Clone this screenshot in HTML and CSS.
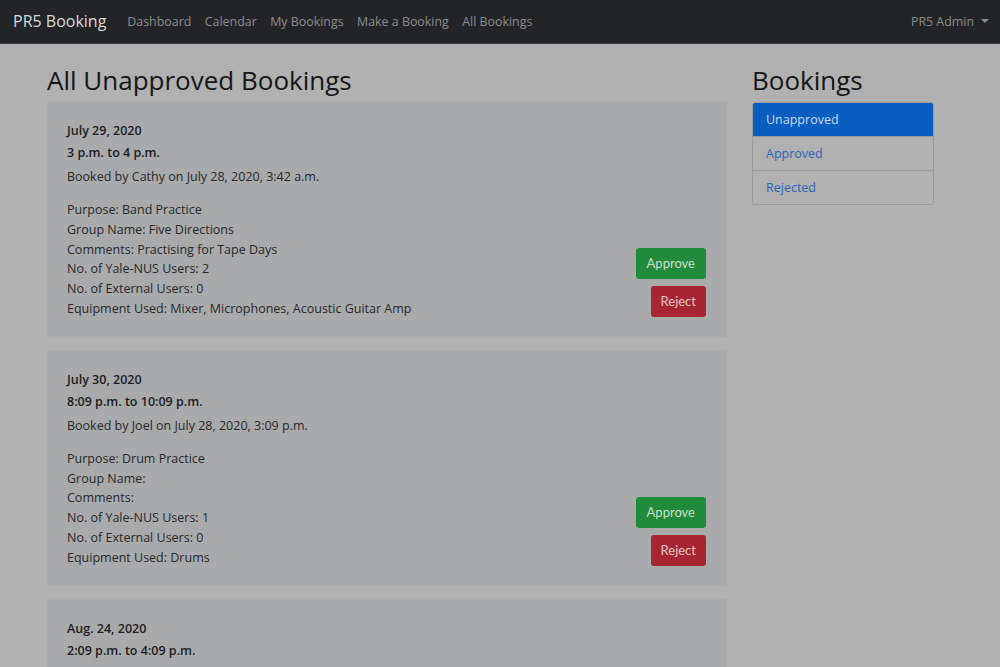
FILE: index.html
```html
<!DOCTYPE html>
<html lang="en">
<head>
<meta charset="utf-8">
<title>All Unapproved Bookings</title>
<link rel="stylesheet" href="styles.css">
</head>
<body>
<nav class="navbar">
  <div class="nav-left">
    <a class="brand" href="#">PR5 Booking</a>
    <a class="nav-link" href="#">Dashboard</a>
    <a class="nav-link" href="#">Calendar</a>
    <a class="nav-link" href="#">My Bookings</a>
    <a class="nav-link" href="#">Make a Booking</a>
    <a class="nav-link" href="#">All Bookings</a>
  </div>
  <a class="nav-link admin" href="#">PR5 Admin <span class="caret"></span></a>
</nav>
<div class="page">
  <main class="main">
    <h1 class="title">All Unapproved Bookings</h1>
    <section class="card">
      <div class="info">
        <div class="bold">July 29, 2020</div>
        <div class="bold time">3 p.m. to 4 p.m.</div>
        <div class="booked">Booked by Cathy on July 28, 2020, 3:42 a.m.</div>
        <div class="details">
          <div>Purpose: Band Practice</div>
          <div>Group Name: Five Directions</div>
          <div>Comments: Practising for Tape Days</div>
          <div>No. of Yale-NUS Users: 2</div>
          <div>No. of External Users: 0</div>
          <div>Equipment Used: Mixer, Microphones, Acoustic Guitar Amp</div>
        </div>
      </div>
      <div class="actions">
        <button class="btn approve">Approve</button>
        <button class="btn reject">Reject</button>
      </div>
    </section>
    <section class="card">
      <div class="info">
        <div class="bold">July 30, 2020</div>
        <div class="bold time">8:09 p.m. to 10:09 p.m.</div>
        <div class="booked">Booked by Joel on July 28, 2020, 3:09 p.m.</div>
        <div class="details">
          <div>Purpose: Drum Practice</div>
          <div>Group Name:</div>
          <div>Comments:</div>
          <div>No. of Yale-NUS Users: 1</div>
          <div>No. of External Users: 0</div>
          <div>Equipment Used: Drums</div>
        </div>
      </div>
      <div class="actions">
        <button class="btn approve">Approve</button>
        <button class="btn reject">Reject</button>
      </div>
    </section>
    <section class="card">
      <div class="info">
        <div class="bold">Aug. 24, 2020</div>
        <div class="bold time">2:09 p.m. to 4:09 p.m.</div>
        <div class="booked">Booked by Joel on July 28, 2020, 3:09 p.m.</div>
      </div>
    </section>
  </main>
  <aside class="side">
    <h2 class="side-title">Bookings</h2>
    <div class="list">
      <a class="list-item active" href="#">Unapproved</a>
      <a class="list-item" href="#">Approved</a>
      <a class="list-item" href="#">Rejected</a>
    </div>
  </aside>
</div>
</body>
</html>
```

FILE: styles.css
```css
html, body {
  margin: 0;
  padding: 0;
  height: 100%;
  overflow: hidden;
}
body {
  background: #b1b1b1;
  font-family: "Open Sans", "Noto Sans", sans-serif;
  font-size: 12.5px;
  line-height: 19.8px;
  color: #27282a;
}
a { text-decoration: none; }

.navbar {
  height: 44px;
  background: #222427;
  border-bottom: 1px solid #3a3c3e;
  box-sizing: border-box;
  display: flex;
  align-items: center;
  justify-content: space-between;
  padding: 0 11px 0 13px;
}
.nav-left {
  display: flex;
  align-items: center;
}
.brand {
  color: #d9d9d9;
  font-size: 16px;
  margin-right: 21px;
}
.nav-link {
  color: #8b8c8d;
  font-size: 12.4px;
  margin-right: 13.5px;
}
.admin {
  margin-right: 0;
  display: flex;
  align-items: center;
}
.caret {
  display: inline-block;
  margin-left: 7px;
  width: 0;
  height: 0;
  border-left: 4px solid transparent;
  border-right: 4px solid transparent;
  border-top: 4px solid #8b8c8d;
}

.page {
  display: flex;
  padding-left: 47px;
  gap: 25px;
}
.main {
  width: 680px;
}
.title {
  font-weight: 400;
  font-size: 26px;
  line-height: 32px;
  margin: 20px 0 0 0;
  color: #151617;
  height: 37px;
}
.card {
  background: #a9aaac;
  padding: 20px 21px 18px 20px;
  margin-bottom: 13px;
  display: flex;
  justify-content: space-between;
  align-items: flex-end;
}
.bold {
  font-weight: 600;
  color: #1c1d1f;
  line-height: 20px;
}
.time {
  margin-top: 2px;
}
.booked {
  margin-top: 4px;
  line-height: 20px;
}
.details {
  margin-top: 13px;
}
.actions {
  display: flex;
  flex-direction: column;
  align-items: flex-end;
  gap: 7px;
  margin-bottom: 2px;
}
.btn {
  font-family: Lato, sans-serif;
  font-size: 13px;
  border: none;
  border-radius: 3px;
  height: 31px;
  padding: 0 11px;
  cursor: pointer;
}
.approve {
  background: #1f8b3b;
  color: #c9dfcd;
}
.reject {
  background: #a72431;
  color: #e2c6c9;
  padding: 0 10px;
}

.side {
  width: 182px;
}
.side-title {
  font-weight: 400;
  font-size: 26px;
  line-height: 32px;
  margin: 20px 0 0 0;
  height: 38px;
  color: #151617;
}
.list {
  display: flex;
  flex-direction: column;
  border: 1px solid #9c9c9c;
  border-radius: 3px;
  overflow: hidden;
}
.list-item {
  display: block;
  height: 33px;
  line-height: 33px;
  padding: 0 13px;
  font-size: 12.5px;
  color: #2a62b8;
  border-top: 1px solid #9c9c9c;
}
.list-item:first-child { border-top: none; }
.list-item.active {
  background: #0a5dc1;
  color: #c9d9ee;
}
```
